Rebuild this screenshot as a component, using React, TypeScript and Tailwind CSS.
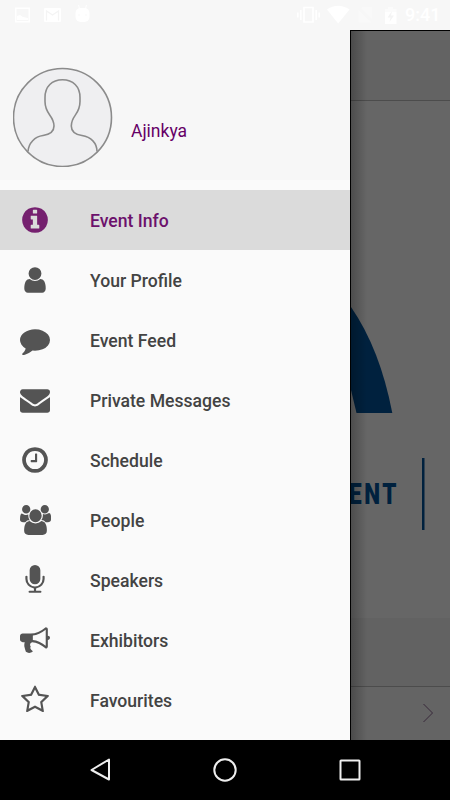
import type { ReactNode } from "react";
import clsx from "clsx";

interface MenuItem {
  label: string;
  path: string;
  wide?: boolean;
}

const menuItems: MenuItem[] = [
  {
    label: "Event Info",
    path: "M1152 1376v-160q0-14-9-23t-23-9h-96v-512q0-14-9-23t-23-9h-320q-14 0-23 9t-9 23v160q0 14 9 23t23 9h96v320h-96q-14 0-23 9t-9 23v160q0 14 9 23t23 9h448q14 0 23-9t9-23zm-128-896v-160q0-14-9-23t-23-9h-192q-14 0-23 9t-9 23v160q0 14 9 23t23 9h192q14 0 23-9t9-23zm640 416q0 209-103 385.5t-279.5 279.5-385.5 103-385.5-103-279.5-279.5-103-385.5 103-385.5 279.5-279.5 385.5-103 385.5 103 279.5 279.5 103 385.5z",
  },
  {
    label: "Your Profile",
    path: "M1536 1399q0 109-62.5 187t-150.5 78h-854q-88 0-150.5-78t-62.5-187q0-85 8.5-160.5t31.5-152 58.5-131 94-89 134.5-34.5q131 128 313 128t313-128q76 0 134.5 34.5t94 89 58.5 131 31.5 152 8.5 160.5zm-256-887q0 159-112.5 271.5t-271.5 112.5-271.5-112.5-112.5-271.5 112.5-271.5 271.5-112.5 271.5 112.5 112.5 271.5z",
  },
  {
    label: "Event Feed",
    path: "M1792 896q0 174-120 321.5t-326 233-450 85.5q-70 0-145-8-198 175-460 242-49 14-114 22-17 2-30.5-9t-17.5-29v-1q-3-4-.5-12t2-10 4.5-9.5l6-9 7-8.5 8-9q7-8 31-34.5t34.5-38 31-39.5 32.5-51 27-59 26-76q-157-89-247.5-220t-90.5-281q0-130 71-248.5t191-204.5 286-136.5 348-50.5q244 0 450 85.5t326 233 120 321.5z",
  },
  {
    label: "Private Messages",
    path: "M1792 710v794q0 66-47 113t-113 47h-1472q-66 0-113-47t-47-113v-794q44 49 101 87 362 246 497 345 57 42 92.5 65.5t94.5 48 110 24.5h2q51 0 110-24.5t94.5-48 92.5-65.5q170-123 498-345 57-39 100-87zm0-294q0 79-49 151t-122 123q-376 261-468 325-10 7-42.5 31t-54 38.5-52 32.5-57.5 27-50 9h-2q-23 0-50-9t-57.5-27-52-32.5-54-38.5-42.5-31q-91-64-262-182.5t-205-142.5q-62-42-117-115.5t-55-136.5q0-78 41.5-130t118.5-52h1472q65 0 112.5 47t47.5 113z",
  },
  {
    label: "Schedule",
    path: "M1024 544v448q0 14-9 23t-23 9h-320q-14 0-23-9t-9-23v-64q0-14 9-23t23-9h224v-352q0-14 9-23t23-9h64q14 0 23 9t9 23zm416 352q0-148-73-273t-198-198-273-73-273 73-198 198-73 273 73 273 198 198 273 73 273-73 198-198 73-273zm224 0q0 209-103 385.5t-279.5 279.5-385.5 103-385.5-103-279.5-279.5-103-385.5 103-385.5 279.5-279.5 385.5-103 385.5 103 279.5 279.5 103 385.5z",
  },
  {
    label: "People",
    wide: true,
    path: "M657 896q-162 5-265 128h-134q-82 0-138-40.5t-56-118.5q0-353 124-353 6 0 43.5 21t97.5 42.5 119 21.5q67 0 133-23-5 37-5 66 0 159 93 290zm1071 637q0 120-73 189.5t-194 69.5h-874q-121 0-194-69.5t-73-189.5q0-53 3.5-103.5t14-109 26.5-108.5 43-97.5 62-81 85.5-53.5 111.5-20q10 0 43 21.5t73 48 107 48 135 21.5 135-21.5 107-48 73-48 43-21.5q61 0 111.5 20t85.5 53.5 62 81 43 97.5 26.5 108.5 14 109 3.5 103.5zm-1024-1277q0 106-75 181t-181 75-181-75-75-181 75-181 181-75 181 75 75 181zm704 384q0 159-112.5 271.5t-271.5 112.5-271.5-112.5-112.5-271.5 112.5-271.5 271.5-112.5 271.5 112.5 112.5 271.5zm576 225q0 78-56 118.5t-138 40.5h-134q-103-123-265-128 93-131 93-290 0-29-5-66 66 23 133 23 59 0 119-21.5t97.5-42.5 43.5-21q124 0 124 353zm-128-609q0 106-75 181t-181 75-181-75-75-181 75-181 181-75 181 75 75 181z",
  },
  {
    label: "Speakers",
    path: "M1472 704v128q0 221-147.5 384.5t-364.5 187.5v132h256q26 0 45 19t19 45-19 45-45 19h-640q-26 0-45-19t-19-45 19-45 45-19h256v-132q-217-24-364.5-187.5t-147.5-384.5v-128q0-26 19-45t45-19 45 19 19 45v128q0 185 131.5 316.5t316.5 131.5 316.5-131.5 131.5-316.5v-128q0-26 19-45t45-19 45 19 19 45zm-256-384v512q0 132-94 226t-226 94-226-94-94-226v-512q0-132 94-226t226-94 226 94 94 226z",
  },
  {
    label: "Exhibitors",
    path: "M1664 640q53 0 90.5 37.5t37.5 90.5-37.5 90.5-90.5 37.5v384q0 52-38 90t-90 38q-417-347-812-380-58 19-91 66t-31 100.5 40 92.5q-20 33-23 65.5t6 58 33.5 55 48 50 61.5 50.5q-29 58-111.5 83t-168.5 11.5-132-55.5q-7-23-29.5-87.5t-32-94.5-23-89-15-101 3.5-98.5 22-110.5h-122q-66 0-113-47t-47-113v-192q0-66 47-113t113-47h480q435 0 896-384 52 0 90 38t38 90v384zm-128 604v-954q-394 302-768 343v270q377 42 768 341z",
  },
  {
    label: "Favourites",
    path: "M1201 1004l306-297-422-62-189-382-189 382-422 62 306 297-73 421 378-199 377 199zm527-357q0 22-26 48l-363 354 86 500q1 7 1 20 0 50-41 50-19 0-40-12l-449-236-449 236q-22 12-40 12-21 0-31.5-14.5t-10.5-35.5q0-6 2-20l86-500-364-354q-25-27-25-48 0-37 56-46l502-73 225-455q19-41 49-41t49 41l225 455 502 73q56 9 56 46z",
  },
];

const StatusBar = () => (
  <header className="flex h-[30px] items-center bg-[#f7f7f7] text-white">
    <svg className="h-[30px] w-[100px]" viewBox="0 0 100 30" fill="currentColor">
      <path fillRule="evenodd" d="M15 7.500h15v15H15zM16.500 9v12h12V9z" />
      <path d="M17 20v-4l3-1 3 2 5 1v2z" />
      <rect x="44" y="8" width="17" height="14" rx="1" />
      <path d="M46.500 20.500V11l6 4 6-4v9.500" fill="none" stroke="#f4f4f4" strokeWidth="1.300" />
      <path d="M78.500 5l1 3.500M86.500 5l-1 3.500" stroke="currentColor" />
      <rect x="75.500" y="8" width="14" height="14" rx="5" />
      <circle cx="79" cy="15" r="0.800" fill="#f7f7f7" />
      <circle cx="86" cy="15" r="0.800" fill="#f7f7f7" />
    </svg>
    <svg className="ml-auto h-[30px] w-[106px]" viewBox="294 0 106 30" fill="currentColor">
      <path
        d="M304 7.500h9v14.500h-9zM300.800 10v10M316.200 10v10M297.800 12.500v5M319.200 12.500v5"
        fill="none"
        stroke="currentColor"
        strokeWidth="1.700"
      />
      <path d="M327 9.500q11-7.500 22.500 0L338.200 23.500z" />
      <path d="M358.500 10l13 12.500h-13zM363 7h9v12l-11-11z" opacity="0.300" />
      <path d="M385 9h3V7h5v2h3.500v3H385z" opacity="0.450" />
      <path d="M385 12h11.500v12H385z" />
      <path d="M392 11l-4.500 6.500h3l-1 4.500 4.500-6.500h-3z" fill="#f4f4f4" />
    </svg>
    <span className="ml-[5px] w-[45px] text-[18px] leading-[30px] font-medium">9:41</span>
  </header>
);

const Avatar = () => (
  <svg className="size-[100px]" viewBox="13 67 100 100" fill="none" stroke="#8b8b8b" strokeWidth="1.600">
    <circle cx="62.500" cy="117.500" r="49" fill="#efeff1" />
    <path d="M28 151.500C28.500 143 35 136.500 43 135.500C50 134.500 54 131 54 126C54 115 45 115 45 101.500V97.500C45 86.500 52 79.700 62.500 79.700S80 86.500 80 97.500V101.500C80 115 71.300 115 71.300 126C71.300 131 75 134.500 82 135.500C91 137 97 143 97 151.500" />
  </svg>
);

const MenuRow = ({ item, active }: { item: MenuItem; active: boolean }) => (
  <li
    className={clsx(
      "flex h-[60px] items-center pl-5",
      active ? "bg-[#dbdbdb] text-[#6c116c]" : "text-[#434343]"
    )}
  >
    <div className="w-[70px]">
      <svg
        className={clsx("h-[30px]", item.wide ? "w-[31px]" : "w-[30px]", active ? "text-[#75206f]" : "text-[#545454]")}
        viewBox={item.wide ? "64 0 1920 1792" : "0 0 1792 1792"}
        preserveAspectRatio="none"
        fill="currentColor"
      >
        <path d={item.path} />
      </svg>
    </div>
    <span className="pt-[2px] text-[17.600px] font-medium">{item.label}</span>
  </li>
);

// Page left under the dimmed overlay while the drawer is open
const Backdrop = () => (
  <div className="relative flex flex-1 flex-col border-t border-l border-black bg-[#666666]">
    <div className="h-[70px] border-b border-[#4c4c4c] bg-[#636363]" />
    <div className="h-[517px]">
      <svg className="h-full w-[99px]" viewBox="351 101 99 517">
        <path d="M351 307Q380 349 392.300 413H356.500L351 390z" fill="#00213e" />
        <rect x="422" y="458" width="2.500" height="72" fill="#00213e" />
        <text
          transform="translate(349 504) scale(0.750 1)"
          fill="#00213e"
          fontSize="30"
          fontWeight="900"
          letterSpacing="3.500"
          className="font-['Roboto',sans-serif]"
        >
          ENT
        </text>
      </svg>
    </div>
    <div className="h-[69px] border-b border-[#4c4c4c] bg-[#626262]" />
    <div className="flex flex-1 items-center justify-end bg-[#646464] pr-[16px] pb-px">
      <svg className="h-5 w-3" viewBox="0 0 12 20" fill="none" stroke="#38283a">
        <path d="M1.500 1l9 9-9 9" />
      </svg>
    </div>
    <div className="absolute inset-y-0 left-0 w-4 bg-linear-to-r from-black/25 to-transparent" />
  </div>
);

const NavButton = ({ children }: { children: ReactNode }) => (
  <button className="flex w-[125px] items-center justify-center">
    <svg className="size-[30px]" viewBox="0 0 30 30" fill="none" stroke="#eeeeee" strokeWidth="2">
      {children}
    </svg>
  </button>
);

const App = () => {
  return (
    <div className="flex h-[800px] w-[450px] flex-col overflow-hidden font-['Roboto',sans-serif]">
      <StatusBar />

      <main className="flex h-[710px]">
        <aside className="w-[350px] bg-[#fafafa]">
          <div className="flex h-[150px] bg-[#f7f7f7] pt-[37px] pl-[12.500px]">
            <Avatar />
            <span className="mt-[51px] ml-[18.500px] text-[17.500px] text-[#660066]">Ajinkya</span>
          </div>
          <ul className="mt-[10px]">
            {menuItems.map((item, index) => (
              <MenuRow key={item.label} item={item} active={index === 0} />
            ))}
          </ul>
        </aside>
        <Backdrop />
      </main>

      <nav className="flex h-[60px] justify-center bg-black">
        <NavButton>
          <path d="M24 4.500v20L6.500 15z" strokeLinejoin="round" />
        </NavButton>
        <NavButton>
          <circle cx="15" cy="15" r="10.700" />
        </NavButton>
        <NavButton>
          <rect x="5.500" y="5.500" width="19" height="19" rx="0.500" />
        </NavButton>
      </nav>
    </div>
  );
};

export default App;
